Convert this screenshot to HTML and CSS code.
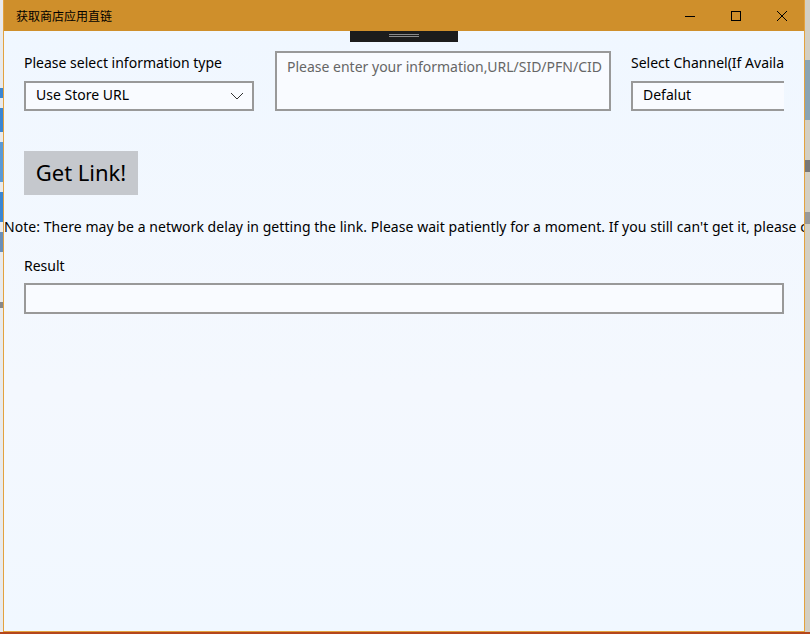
FILE: index.html
```html
<!DOCTYPE html>
<html lang="zh-CN">

<head>
  <meta charset="UTF-8" />
  <title>获取商店应用直链</title>
  <link rel="stylesheet" href="styles.css">
</head>

<body>
  <div class="desktop">
    <div class="edge edge-left">
      <span class="mark m1"></span>
      <span class="mark m2"></span>
      <span class="mark m3"></span>
      <span class="mark m4"></span>
      <span class="mark m5"></span>
      <span class="mark m6"></span>
    </div>

    <div class="window">
      <div class="titlebar">
        <span class="title">获取商店应用直链</span>
        <div class="controls">
          <span class="ctl">
            <svg width="12" height="12" viewBox="0 0 12 12"><path d="M1 6.5h10" stroke="#000" stroke-width="1" fill="none"/></svg>
          </span>
          <span class="ctl">
            <svg width="12" height="12" viewBox="0 0 12 12"><rect x="1.5" y="1.5" width="9" height="9" stroke="#000" stroke-width="1" fill="none"/></svg>
          </span>
          <span class="ctl">
            <svg width="12" height="12" viewBox="0 0 12 12"><path d="M1 1l10 10M11 1L1 11" stroke="#000" stroke-width="1" fill="none"/></svg>
          </span>
        </div>
      </div>

      <div class="client">
        <div class="debug-handle"><span></span></div>

        <div class="form-row">
          <div class="field type-field">
            <div class="label">Please select information type</div>
            <div class="combo">
              <span>Use Store URL</span>
              <svg width="14" height="8" viewBox="0 0 14 8"><path d="M1 1l6 6 6-6" stroke="#333" stroke-width="1" fill="none"/></svg>
            </div>
          </div>

          <div class="info-box">Please enter your information,URL/SID/PFN/CID</div>

          <div class="field channel-field">
            <div class="label">Select Channel(If Available)</div>
            <div class="combo open-end">
              <span>Defalut</span>
            </div>
          </div>
        </div>

        <button class="get-link" type="button">Get Link!</button>

        <p class="note">Note: There may be a network delay in getting the link. Please wait patiently for a moment. If you still can't get it, please check your network connection and try again.</p>

        <div class="result">
          <div class="label">Result</div>
          <div class="result-box"></div>
        </div>
      </div>
    </div>

    <div class="edge edge-right">
      <span class="mark r1"></span>
      <span class="mark r2"></span>
      <span class="mark r3"></span>
    </div>

    <div class="taskbar"></div>
  </div>
</body>

</html>
```

FILE: styles.css
```css
html,
body {
  margin: 0;
  padding: 0;
  width: 810px;
  height: 634px;
  overflow: hidden;
  font-family: "Noto Sans", "Noto Sans CJK SC", sans-serif;
}

.desktop {
  display: grid;
  grid-template-columns: 3px 802px 5px;
  grid-template-rows: 632px 2px;
  width: 810px;
  height: 634px;
  background: #c9c2ad;
}

/* bits of the desktop showing beside the window */
.edge {
  display: flex;
  flex-direction: column;
  overflow: hidden;
}

.edge-left {
  background: #e9eaec;
  gap: 10px;
  padding-top: 88px;
}

.edge-right {
  background: #d3cfc3;
  padding-top: 60px;
  gap: 40px;
}

.mark {
  display: block;
  width: 3px;
  height: 10px;
  background: #3b86d2;
}

.m2 { height: 24px; }
.m3 { height: 40px; background: #5b9ad6; }
.m4 { height: 30px; }
.m5 { height: 20px; background: #6a8fb8; }
.m6 { height: 6px; background: #888; margin-top: 40px; }

.r1 {
  width: 5px;
  height: 60px;
  background: #8aa4b3;
}

.r2 {
  width: 5px;
  height: 12px;
  background: #777;
}

.r3 {
  width: 5px;
  height: 12px;
  background: #999;
}

.taskbar {
  grid-column: 1 / 4;
  background: #b4461b;
}

.window {
  display: flex;
  flex-direction: column;
  border: 1px solid #e3a23e;
  border-top: none;
  background: #f2f8fe;
  overflow: hidden;
}

.titlebar {
  display: flex;
  align-items: center;
  justify-content: space-between;
  height: 31px;
  margin: 0 -1px;
  background: #cf8f2b;
  flex: none;
}

.title {
  padding-left: 13px;
  font-size: 12px;
  color: #000;
}

.controls {
  display: flex;
  height: 100%;
}

.ctl {
  display: flex;
  align-items: center;
  justify-content: center;
  width: 46px;
  height: 100%;
}

.client {
  position: relative;
  flex: 1;
  padding: 20px 0 0 0;
  background: linear-gradient(#f0f7ff, #f4f8fe 60%, #f1f8ff);
}

/* collapsed xaml debug toolbar */
.debug-handle {
  position: absolute;
  top: 0;
  left: 346px;
  width: 108px;
  height: 11px;
  background: #1c1c1c;
  display: flex;
  justify-content: center;
  padding-top: 3px;
  box-sizing: border-box;
}

.debug-handle span {
  width: 30px;
  height: 1px;
  border-top: 1px solid #8a8a8a;
  border-bottom: 1px solid #8a8a8a;
}

.form-row {
  display: flex;
  align-items: flex-end;
  gap: 21px;
  padding-left: 20px;
}

.field {
  display: flex;
  flex-direction: column;
  gap: 8px;
}

.type-field {
  width: 230px;
}

.channel-field {
  width: 153px;
  margin-left: -1px;
  overflow: hidden;
}

.label {
  font-size: 14px;
  line-height: 20px;
  color: #000;
  white-space: nowrap;
}

.combo {
  display: flex;
  align-items: center;
  justify-content: space-between;
  height: 30px;
  box-sizing: border-box;
  border: 2px solid #999;
  padding: 0 8px 3px 10px;
  background: #f9fbff;
  font-size: 14px;
  color: #000;
}

.combo svg {
  margin-top: 3px;
}

.combo.open-end {
  width: 180px;
}

.info-box {
  width: 336px;
  height: 60px;
  box-sizing: border-box;
  border: 2px solid #999;
  padding: 4px 10px;
  background: #f9fbff;
  font-size: 14px;
  color: #666;
  white-space: nowrap;
  overflow: hidden;
}

.get-link {
  display: block;
  margin: 40px 0 0 20px;
  width: 114px;
  height: 44px;
  border: none;
  background: #c5c8cd;
  font-family: inherit;
  font-size: 22px;
  color: #000;
  padding: 0 0 2px 0;
}

.note {
  margin: 22px 0 0 0;
  font-size: 14px;
  line-height: 20px;
  letter-spacing: 0.05px;
  white-space: nowrap;
  overflow: hidden;
  color: #000;
}

.result {
  display: flex;
  flex-direction: column;
  gap: 7px;
  padding-left: 20px;
  margin-top: 19px;
}

.result-box {
  width: 760px;
  height: 31px;
  box-sizing: border-box;
  border: 2px solid #999;
  background: #f9fbff;
}
```
